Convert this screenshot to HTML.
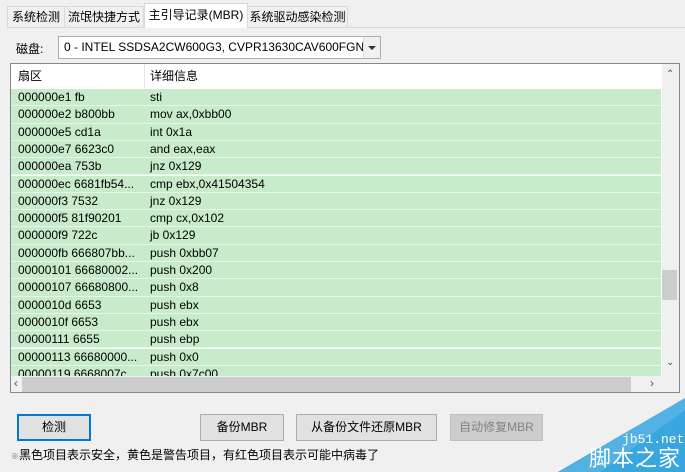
<!DOCTYPE html>
<html><head><meta charset="utf-8"><style>
*{margin:0;padding:0;box-sizing:border-box}
body{width:685px;height:472px;background:#f0f0f0;font-family:"Liberation Sans","Noto Sans CJK SC",sans-serif;font-size:12px;color:#000;position:relative;overflow:hidden}
.a{position:absolute}
.tab{position:absolute;top:6px;height:21px;border:1px solid #d9d9d9;border-bottom:none;background:#f0f0f0;text-align:center;line-height:20px}
.btn{position:absolute;top:414px;height:27px;border:1px solid #adadad;background:#e1e1e1;text-align:center;line-height:25px}
.row{position:absolute;left:0;width:650px;height:17.3px;background:#c7ebcb;border-bottom:1px solid #e6f6e8;line-height:16px}
.row span{position:absolute;left:7px}
.row span+span{left:139px}
</style></head><body>
<div class="a" style="left:7px;top:27px;width:678px;height:1px;background:#d9d9d9"></div>
<div class="tab" style="left:7px;width:58px">系统检测</div>
<div class="tab" style="left:64px;width:80px">流氓快捷方式</div>
<div class="tab" style="left:144px;top:3px;height:25px;width:104px;background:#fff;border-color:#d9d9d9;line-height:22px">主引导记录(MBR)</div>
<div class="tab" style="left:247px;width:101px">系统驱动感染检测</div>
<div class="a" style="left:16px;top:41px;line-height:16px">磁盘:</div>
<div class="a" style="left:58px;top:36px;width:323px;height:23px;border:1px solid #adadad;background:#fff;line-height:20px;padding-left:5px">0 - INTEL SSDSA2CW600G3, CVPR13630CAV600FGN</div>
<div class="a" style="left:363px;top:37px;width:17px;height:21px;background:#f0f0f0;border-left:1px solid #ddd"><div style="margin:9px auto 0;width:0;height:0;border-left:4px solid transparent;border-right:4px solid transparent;border-top:4px solid #333"></div></div>
<div class="a" style="left:10px;top:63px;width:670px;height:330px;border:1px solid #828790;background:#fff;overflow:hidden">
<div class="a" style="left:0;top:0;width:651px;height:24px;background:#fff;line-height:24px"><span class="a" style="left:7px">扇区</span><span class="a" style="left:139px">详细信息</span></div>
<div class="a" style="left:133px;top:0;width:1px;height:24px;background:#e5e5e5"></div>
<div class="a" style="left:0;top:25px;width:651px;height:287px;overflow:hidden">
<div class="row" style="top:0"><span>000000e1 fb</span><span>sti</span></div>
<div class="row" style="top:17.3px"><span>000000e2 b800bb</span><span>mov ax,0xbb00</span></div>
<div class="row" style="top:34.6px"><span>000000e5 cd1a</span><span>int 0x1a</span></div>
<div class="row" style="top:51.9px"><span>000000e7 6623c0</span><span>and eax,eax</span></div>
<div class="row" style="top:69.2px"><span>000000ea 753b</span><span>jnz 0x129</span></div>
<div class="row" style="top:86.5px"><span>000000ec 6681fb54...</span><span>cmp ebx,0x41504354</span></div>
<div class="row" style="top:103.8px"><span>000000f3 7532</span><span>jnz 0x129</span></div>
<div class="row" style="top:121.1px"><span>000000f5 81f90201</span><span>cmp cx,0x102</span></div>
<div class="row" style="top:138.4px"><span>000000f9 722c</span><span>jb 0x129</span></div>
<div class="row" style="top:155.7px"><span>000000fb 666807bb...</span><span>push 0xbb07</span></div>
<div class="row" style="top:173px"><span>00000101 66680002...</span><span>push 0x200</span></div>
<div class="row" style="top:190.3px"><span>00000107 66680800...</span><span>push 0x8</span></div>
<div class="row" style="top:207.6px"><span>0000010d 6653</span><span>push ebx</span></div>
<div class="row" style="top:224.9px"><span>0000010f 6653</span><span>push ebx</span></div>
<div class="row" style="top:242.2px"><span>00000111 6655</span><span>push ebp</span></div>
<div class="row" style="top:259.5px"><span>00000113 66680000...</span><span>push 0x0</span></div>
<div class="row" style="top:276.8px"><span>00000119 6668007c...</span><span>push 0x7c00</span></div>
</div>
<div class="a" style="left:651px;top:0;width:17px;height:312px;background:#f0f0f0"></div>
<div class="a" style="left:655px;top:5px;font-size:10px;color:#555">&#8963;</div>
<div class="a" style="left:651px;top:206px;width:15px;height:30px;background:#cdcdcd"></div>
<div class="a" style="left:655px;top:293px;font-size:10px;color:#555">&#8964;</div>
<div class="a" style="left:0;top:312px;width:668px;height:17px;background:#f0f0f0"></div>
<div class="a" style="left:11px;top:313px;width:609px;height:15px;background:#cdcdcd"></div>
<div class="a" style="left:3px;top:312px;font-size:12px;color:#555">&#8249;</div>
<div class="a" style="left:639px;top:312px;font-size:12px;color:#555">&#8250;</div>
</div>
<div class="btn" style="left:17px;width:74px;border:2px solid #0078d7;line-height:23px">检测</div>
<div class="btn" style="left:200px;width:84px">备份MBR</div>
<div class="btn" style="left:296px;width:141px">从备份文件还原MBR</div>
<div class="btn" style="left:450px;width:93px;border-color:#bfbfbf;background:#ccc;color:#838383">自动修复MBR</div>
<div class="a" style="left:11px;top:447px;line-height:16px"><span style="font-size:8px;color:#666">※</span>黑色项目表示安全，黄色是警告项目，有红色项目表示可能中病毒了</div>
<svg class="a" style="left:0;top:0" width="685" height="472"><polygon points="685,398 685,472 558,472" fill="#39a6df"/><polygon points="685,398 560,472 600,472 685,410" fill="#6dbde8" opacity=".5"/></svg>
<div class="a" style="left:622px;top:432px;color:#fff;font-family:'Liberation Mono',monospace;font-size:13px">jb51.net</div>
<div class="a" style="left:589px;top:446px;color:#fff;font-size:22px;line-height:26px;letter-spacing:1px">脚本之家</div>
</body></html>
